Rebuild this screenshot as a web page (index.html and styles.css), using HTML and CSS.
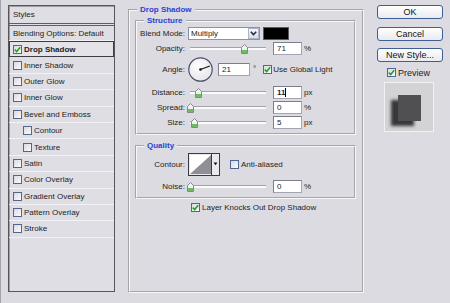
FILE: index.html
```
<!DOCTYPE html>
<html lang="en">
<head>
<meta charset="utf-8">
<title>Layer Style</title>
<link rel="stylesheet" href="styles.css">
</head>
<body>
<div class="dialog">
  <div class="list">
    <div class="list-head">Styles</div>
    <div class="item first">Blending Options: Default</div>
    <div class="item selected"><span class="cb"><svg width="7" height="7" viewBox="0 0 7 7"><path d="M0.8 3.6 L2.7 5.5 L6.2 1.2" fill="none" stroke="#23a123" stroke-width="1.6"/></svg></span><span class="bold">Drop Shadow</span></div>
    <div class="item"><span class="cb"></span>Inner Shadow</div>
    <div class="item"><span class="cb"></span>Outer Glow</div>
    <div class="item"><span class="cb"></span>Inner Glow</div>
    <div class="item"><span class="cb"></span>Bevel and Emboss</div>
    <div class="item sub"><span class="cb"></span>Contour</div>
    <div class="item sub"><span class="cb"></span>Texture</div>
    <div class="item"><span class="cb"></span>Satin</div>
    <div class="item"><span class="cb"></span>Color Overlay</div>
    <div class="item"><span class="cb"></span>Gradient Overlay</div>
    <div class="item"><span class="cb"></span>Pattern Overlay</div>
    <div class="item"><span class="cb"></span>Stroke</div>
  </div>

  <fieldset class="outer">
    <legend>Drop Shadow</legend>
    <fieldset class="inner">
      <legend>Structure</legend>
      <div class="row r-blend">
        <span class="lbl">Blend Mode:</span>
        <div class="select"><span class="sel-text">Multiply</span><span class="sel-btn"><svg width="7" height="5" viewBox="0 0 7 5"><path d="M0.8 0.8 L3.5 3.6 L6.2 0.8" fill="none" stroke="#2b2b33" stroke-width="1.6"/></svg></span></div>
        <span class="swatch"></span>
      </div>
      <div class="row r-opacity">
        <span class="lbl">Opacity:</span>
        <div class="slider"><span class="thumb" style="left:56px"><svg width="7" height="10" viewBox="0 0 7 10"><path d="M0.5 3.5 L3.5 0.5 L6.5 3.5 V9.5 H0.5 Z" fill="#f2f2f4" stroke="#86868c"/><rect x="1" y="6" width="5" height="3" fill="#6cbb5e"/></svg></span></div>
        <span class="field">71</span><span class="unit">%</span>
      </div>
      <div class="row r-angle">
        <span class="lbl">Angle:</span>
        <span class="dial"><svg width="25" height="25" viewBox="0 0 25 25"><defs><radialGradient id="dg" cx="0.4" cy="0.35" r="0.7"><stop offset="0" stop-color="#ffffff"/><stop offset="1" stop-color="#e4e4ea"/></radialGradient></defs><circle cx="12.5" cy="12.5" r="11.7" fill="url(#dg)" stroke="#4b4f66" stroke-width="1.2"/><line x1="12.5" y1="12.5" x2="21.8" y2="8.9" stroke="#111" stroke-width="1.1"/><circle cx="12.5" cy="12.5" r="1.3" fill="#111"/></svg></span>
        <span class="field wide">21</span><span class="deg">°</span>
        <span class="cb gap"><svg width="7" height="7" viewBox="0 0 7 7"><path d="M0.8 3.6 L2.7 5.5 L6.2 1.2" fill="none" stroke="#23a123" stroke-width="1.6"/></svg></span><span class="cbtext">Use Global Light</span>
      </div>
      <div class="row r-distance">
        <span class="lbl">Distance:</span>
        <div class="slider"><span class="thumb" style="left:10.5px"><svg width="7" height="10" viewBox="0 0 7 10"><path d="M0.5 3.5 L3.5 0.5 L6.5 3.5 V9.5 H0.5 Z" fill="#f2f2f4" stroke="#86868c"/><rect x="1" y="6" width="5" height="3" fill="#6cbb5e"/></svg></span></div>
        <span class="field"><span class="sel-val">11</span><span class="caret"></span></span><span class="unit">px</span>
      </div>
      <div class="row r-spread">
        <span class="lbl">Spread:</span>
        <div class="slider"><span class="thumb" style="left:2px"><svg width="7" height="10" viewBox="0 0 7 10"><path d="M0.5 3.5 L3.5 0.5 L6.5 3.5 V9.5 H0.5 Z" fill="#f2f2f4" stroke="#86868c"/><rect x="1" y="6" width="5" height="3" fill="#6cbb5e"/></svg></span></div>
        <span class="field">0</span><span class="unit">%</span>
      </div>
      <div class="row r-size">
        <span class="lbl">Size:</span>
        <div class="slider"><span class="thumb" style="left:6px"><svg width="7" height="10" viewBox="0 0 7 10"><path d="M0.5 3.5 L3.5 0.5 L6.5 3.5 V9.5 H0.5 Z" fill="#f2f2f4" stroke="#86868c"/><rect x="1" y="6" width="5" height="3" fill="#6cbb5e"/></svg></span></div>
        <span class="field">5</span><span class="unit">px</span>
      </div>
    </fieldset>

    <fieldset class="quality">
      <legend>Quality</legend>
      <div class="row r-contour">
        <span class="lbl">Contour:</span>
        <span class="contour"><svg width="32" height="23" viewBox="0 0 32 23"><rect x="0.5" y="0.5" width="31" height="22" fill="#e9e9ee" stroke="#3a3a44"/><rect x="2" y="2" width="21" height="19" fill="#ffffff"/><path d="M2 21 L23 2 V21 Z" fill="#8f8f96"/><line x1="23.5" y1="1" x2="23.5" y2="22" stroke="#3a3a44"/><path d="M25.6 9.5 H29.4 L27.5 12.3 Z" fill="#111"/></svg></span>
        <span class="cb aa"></span><span class="cbtext">Anti-aliased</span>
      </div>
      <div class="row r-noise">
        <span class="lbl">Noise:</span>
        <div class="slider"><span class="thumb" style="left:2px"><svg width="7" height="10" viewBox="0 0 7 10"><path d="M0.5 3.5 L3.5 0.5 L6.5 3.5 V9.5 H0.5 Z" fill="#f2f2f4" stroke="#86868c"/><rect x="1" y="6" width="5" height="3" fill="#6cbb5e"/></svg></span></div>
        <span class="field">0</span><span class="unit">%</span>
      </div>
    </fieldset>

    <div class="row r-knock">
      <span class="cb"><svg width="7" height="7" viewBox="0 0 7 7"><path d="M0.8 3.6 L2.7 5.5 L6.2 1.2" fill="none" stroke="#23a123" stroke-width="1.6"/></svg></span><span>Layer Knocks Out Drop Shadow</span>
    </div>
  </fieldset>

  <div class="side">
    <div class="btn">OK</div>
    <div class="btn b-cancel">Cancel</div>
    <div class="btn b-new">New Style...</div>
    <div class="preview-row"><span class="cb"><svg width="7" height="7" viewBox="0 0 7 7"><path d="M0.8 3.6 L2.7 5.5 L6.2 1.2" fill="none" stroke="#23a123" stroke-width="1.6"/></svg></span><span>Preview</span></div>
    <div class="preview"><div class="shape"></div></div>
  </div>
</div>
</body>
</html>
```
FILE: styles.css
```
* { box-sizing: border-box; }
html, body { margin: 0; padding: 0; }
body {
  width: 450px;
  height: 303px;
  overflow: hidden;
  background: #dcdbe1;
  font-family: "Liberation Sans", Arial, sans-serif;
  font-size: 8px;
  color: #1d1d22;
}
.dialog {
  display: flex;
  align-items: flex-start;
  height: 303px;
  padding: 5px 7px 10px 7px;
  border-left: 1px solid #a2a2aa;
}

/* style list */
.list {
  width: 107px;
  align-self: stretch;
  margin-bottom: 1px;
  border: 1px solid #56565c;
  box-shadow: inset 1px 1px 0 #9d9da4;
  background: #dfdee4;
  display: flex;
  flex-direction: column;
}
.list-head {
  height: 20px;
  padding-left: 4px;
  line-height: 17px;
  border-bottom: 3px double #5e5e66;
}
.item {
  display: flex;
  align-items: center;
  height: 16.4px;
  padding-left: 4px;
  border-bottom: 1px solid #f2f2f5;
  white-space: nowrap;
  flex: none;
}
.item.first { height: 15px; }
.item.selected {
  border: 1px solid #3d3d44;
  padding-left: 3px;
  background: #e4e3e8;
}
.item.sub { padding-left: 14px; }
.bold { font-weight: bold; }

.cb {
  width: 9px;
  height: 9px;
  flex: none;
  border: 1px solid #52668e;
  background: linear-gradient(135deg, #d9d9e0, #fbfbfd);
  margin-right: 2px;
  display: flex;
  align-items: center;
  justify-content: center;
}
.cb svg { display: block; }

/* group boxes */
fieldset {
  margin: 0;
  padding: 0;
  min-inline-size: 0;
  border: 2px groove #f8f8fa;
}
legend {
  padding: 0 3px;
  font-weight: bold;
  color: #2a42d4;
  font-size: 8px;
  line-height: 10px;
}
.outer {
  width: 236px;
  margin-left: 13px;
  align-self: stretch;
  padding: 0 6px 0 5px;
}
.outer > legend { margin-left: 2px; }
.inner {
  margin-top: 1px;
  padding: 1px 0 4px 0;
}
.inner > legend, .quality > legend { margin-left: 7px; }
.quality {
  margin-top: 6px;
  padding: 1px 0 4px 0;
}

.row {
  display: flex;
  align-items: center;
  height: 14px;
  white-space: nowrap;
}
.lbl {
  width: 51px;
  flex: none;
  text-align: right;
  padding-right: 3px;
}
.r-blend { height: 13px; }
.r-opacity { margin-top: 1px; }
.r-angle { height: 25px; margin-top: 2px; }
.r-distance { margin-top: 3px; }
.r-spread { margin-top: 1px; }
.r-size { margin-top: 1px; }
.r-contour { height: 23px; margin-top: 1px; }
.r-noise { margin-top: 3px; }
.r-knock { height: 12px; margin-top: 2px; padding-left: 56px; }

.select {
  display: flex;
  width: 72px;
  height: 13px;
  flex: none;
  border: 1px solid #8793ad;
  background: #fff;
}
.sel-text { flex: 1; padding-left: 2px; line-height: 11px; }
.sel-btn {
  width: 11px;
  border: 1px solid #aab4cc;
  background: linear-gradient(#f6f7fb, #d9dde8);
  display: flex;
  align-items: center;
  justify-content: center;
}
.sel-btn svg { display: block; }
.swatch {
  width: 26px;
  height: 13px;
  margin-left: 3px;
  background: #000;
  border: 1px solid #5a5a60;
  flex: none;
}

.slider {
  position: relative;
  width: 80px;
  height: 14px;
  flex: none;
}
.slider::before {
  content: "";
  position: absolute;
  left: 2px;
  width: 76px;
  top: 6px;
  height: 2px;
  border-top: 1px solid #a2a2a9;
  background: #fbfbfc;
}
.thumb {
  position: absolute;
  top: 3px;
  width: 7px;
  height: 10px;
  margin-left: -3.5px;
}
.thumb svg { display: block; }

.field {
  width: 29px;
  height: 13px;
  flex: none;
  margin-left: 5px;
  background: #fff;
  border: 1px solid #a3a6b2;
  border-top-color: #7b7e8c;
  border-left-color: #7b7e8c;
  padding-left: 3px;
  line-height: 11px;
  display: flex;
  align-items: center;
}
.field.wide { width: 32px; }
.unit { margin-left: 2px; }
.sel-val { font-weight: bold; }
.caret {
  width: 1px;
  height: 9px;
  background: #000;
}

.dial { width: 25px; height: 25px; flex: none; }
.dial svg { display: block; }
.deg { margin-left: 3px; margin-top: -3px; }
.cb.gap { margin-left: 7px; margin-right: 1px; }
.contour { width: 32px; height: 23px; flex: none; }
.contour svg { display: block; }
.cb.aa { margin-left: 10px; margin-right: 2px; }

/* right column */
.side {
  width: 66px;
  margin-left: 13px;
  display: flex;
  flex-direction: column;
  flex: none;
}
.btn {
  height: 14px;
  border: 1px solid #3e5f96;
  border-radius: 3px;
  background: linear-gradient(#ffffff, #e9eaef);
  font-size: 9px;
  display: flex;
  align-items: center;
  justify-content: center;
  color: #111;
}
.b-cancel { margin-top: 8px; }
.b-new { margin-top: 7px; }
.preview-row {
  margin-top: 6px;
  padding-left: 10px;
  height: 9px;
  display: flex;
  align-items: center;
  font-size: 9px;
}
.preview-row .cb { margin-right: 2px; }
.preview {
  width: 50px;
  height: 50px;
  margin: 5px 0 0 7px;
  background: #d3d3d6;
  border: 1px solid #f1f1f4;
}
.shape {
  width: 23px;
  height: 26px;
  margin: 12px 0 0 13px;
  background: #505053;
  box-shadow: -7px 5px 3px rgba(28, 28, 32, 0.85);
}
```
